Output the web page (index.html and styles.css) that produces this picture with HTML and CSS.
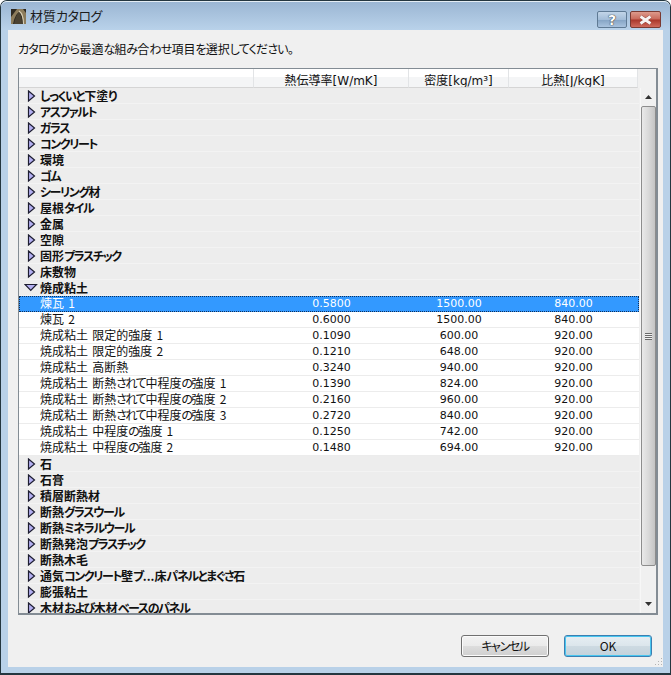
FILE: index.html
```html
<!DOCTYPE html>
<html lang="ja">
<head>
<meta charset="utf-8">
<title>材質カタログ</title>
<link rel="stylesheet" href="styles.css">
</head>
<body>
<svg class="defs" width="0" height="0" aria-hidden="true">
  <symbol id="closed" viewBox="0 0 9 12"><path d="M1.500 1 L7.500 6 L1.500 11 Z" fill="#b4b0f2" stroke="#1c1c30" stroke-width="1.200"/></symbol>
  <symbol id="open" viewBox="0 0 14 9"><path d="M1 1.500 H12.500 L6.750 7.500 Z" fill="#b4b0f2" stroke="#1c1c30" stroke-width="1.200"/></symbol>
</svg>
<div class="window">
  <header class="titlebar">
    <svg class="app-icon" viewBox="0 0 15 15" aria-hidden="true">
      <rect width="15" height="15" fill="#2e2a22"/>
      <path d="M0 15 V8 L6 0 H12 L15 4 V15 H12 C12 8 10 4 8 3 C5 5 3 10 2 15 Z" fill="#8c7c5c"/>
      <path d="M3 15 C4 9 6 5 8 3 C10 5 11 9 11 15 Z" fill="#4a4232"/>
      <path d="M8 2 C11 4 12.500 9 12.500 15" fill="none" stroke="#d6cdb4" stroke-width="1.200"/>
    </svg>
    <span class="title">材質<span class="k">カタログ</span></span>
    <div class="caption-btns">
      <button class="cap cap-help">?</button>
      <button class="cap cap-close">
        <svg viewBox="0 0 15 10" width="15" height="10" aria-hidden="true"><path d="M2.500 1.500 L12.500 8.500 M12.500 1.500 L2.500 8.500" stroke="#8a3a30" stroke-width="3.600"/><path d="M2.500 1.500 L12.500 8.500 M12.500 1.500 L2.500 8.500" stroke="#f7f4f3" stroke-width="2.800"/></svg>
      </button>
    </div>
  </header>
  <main class="client">
    <p class="prompt"><span class="k">カタログから</span>最適<span class="k">な</span>組<span class="k">み</span>合<span class="k">わせ</span>項目<span class="k">を</span>選択<span class="k">してください。</span></p>
    <section class="table">
      <div class="head">
        <div class="hcell hname"></div>
        <div class="hcell">熱伝導率<span class="lat">[W/mK]</span></div>
        <div class="hcell">密度<span class="lat">[kg/m³]</span></div>
        <div class="hcell hlast">比熱<span class="lat">[J/kgK]</span></div>
      </div>
      <div class="body">
        <div class="rows">
          <div class="row group"><svg class="arrow"><use href="#closed"/></svg><span><span class="k">しっくいと</span>下塗<span class="k">り</span></span></div>
          <div class="row group"><svg class="arrow"><use href="#closed"/></svg><span><span class="k">アスファルト</span></span></div>
          <div class="row group"><svg class="arrow"><use href="#closed"/></svg><span><span class="k">ガラス</span></span></div>
          <div class="row group"><svg class="arrow"><use href="#closed"/></svg><span><span class="k">コンクリート</span></span></div>
          <div class="row group"><svg class="arrow"><use href="#closed"/></svg><span>環境</span></div>
          <div class="row group"><svg class="arrow"><use href="#closed"/></svg><span><span class="k">ゴム</span></span></div>
          <div class="row group"><svg class="arrow"><use href="#closed"/></svg><span><span class="k">シーリング</span>材</span></div>
          <div class="row group"><svg class="arrow"><use href="#closed"/></svg><span>屋根<span class="k">タイル</span></span></div>
          <div class="row group"><svg class="arrow"><use href="#closed"/></svg><span>金属</span></div>
          <div class="row group"><svg class="arrow"><use href="#closed"/></svg><span>空隙</span></div>
          <div class="row group"><svg class="arrow"><use href="#closed"/></svg><span>固形<span class="k">プラスチック</span></span></div>
          <div class="row group"><svg class="arrow"><use href="#closed"/></svg><span>床敷物</span></div>
          <div class="row group"><svg class="arrow-open"><use href="#open"/></svg><span>焼成粘土</span></div>
          <div class="row item selected"><span class="name">煉瓦 1</span><span class="val">0.5800</span><span class="val">1500.00</span><span class="val">840.00</span></div>
          <div class="row item"><span class="name">煉瓦 2</span><span class="val">0.6000</span><span class="val">1500.00</span><span class="val">840.00</span></div>
          <div class="row item"><span class="name">焼成粘土 限定的強度 1</span><span class="val">0.1090</span><span class="val">600.00</span><span class="val">920.00</span></div>
          <div class="row item"><span class="name">焼成粘土 限定的強度 2</span><span class="val">0.1210</span><span class="val">648.00</span><span class="val">920.00</span></div>
          <div class="row item"><span class="name">焼成粘土 高断熱</span><span class="val">0.3240</span><span class="val">940.00</span><span class="val">920.00</span></div>
          <div class="row item"><span class="name">焼成粘土 断熱<span class="k">されて</span>中程度<span class="k">の</span>強度 1</span><span class="val">0.1390</span><span class="val">824.00</span><span class="val">920.00</span></div>
          <div class="row item"><span class="name">焼成粘土 断熱<span class="k">されて</span>中程度<span class="k">の</span>強度 2</span><span class="val">0.2160</span><span class="val">960.00</span><span class="val">920.00</span></div>
          <div class="row item"><span class="name">焼成粘土 断熱<span class="k">されて</span>中程度<span class="k">の</span>強度 3</span><span class="val">0.2720</span><span class="val">840.00</span><span class="val">920.00</span></div>
          <div class="row item"><span class="name">焼成粘土 中程度<span class="k">の</span>強度 1</span><span class="val">0.1250</span><span class="val">742.00</span><span class="val">920.00</span></div>
          <div class="row item"><span class="name">焼成粘土 中程度<span class="k">の</span>強度 2</span><span class="val">0.1480</span><span class="val">694.00</span><span class="val">920.00</span></div>
          <div class="row group"><svg class="arrow"><use href="#closed"/></svg><span>石</span></div>
          <div class="row group"><svg class="arrow"><use href="#closed"/></svg><span>石膏</span></div>
          <div class="row group"><svg class="arrow"><use href="#closed"/></svg><span>積層断熱材</span></div>
          <div class="row group"><svg class="arrow"><use href="#closed"/></svg><span>断熱<span class="k">グラスウール</span></span></div>
          <div class="row group"><svg class="arrow"><use href="#closed"/></svg><span>断熱<span class="k">ミネラルウール</span></span></div>
          <div class="row group"><svg class="arrow"><use href="#closed"/></svg><span>断熱発泡<span class="k">プラスチック</span></span></div>
          <div class="row group"><svg class="arrow"><use href="#closed"/></svg><span>断熱木毛</span></div>
          <div class="row group"><svg class="arrow"><use href="#closed"/></svg><span>通気<span class="k">コンクリート</span>壁<span class="k">ブ</span>...床<span class="k">パネルとまぐさ</span>石</span></div>
          <div class="row group"><svg class="arrow"><use href="#closed"/></svg><span>膨張粘土</span></div>
          <div class="row group"><svg class="arrow"><use href="#closed"/></svg><span>木材<span class="k">および</span>木材<span class="k">ベースのパネル</span></span></div>
        </div>
        <div class="scrollbar">
          <div class="sb-btn"><svg viewBox="0 0 7 4" width="7" height="4" aria-hidden="true"><path d="M3.500 0 L7 4 H0 Z" fill="#333"/></svg></div>
          <div class="thumb"><div class="grip"></div></div>
          <div class="sb-btn"><svg viewBox="0 0 7 4" width="7" height="4" aria-hidden="true"><path d="M0 0 H7 L3.500 4 Z" fill="#333"/></svg></div>
        </div>
      </div>
    </section>
    <footer class="actions">
      <button class="btn"><span class="k">キャンセル</span></button>
      <button class="btn btn-default">OK</button>
    </footer>
    <svg class="size-grip" viewBox="0 0 8 8" aria-hidden="true"><path d="M6 0h1v1H6zM3 3h1v1H3zM6 3h1v1H6zM0 6h1v1H0zM3 6h1v1H3zM6 6h1v1H6z" fill="#b4b4b4"/></svg>
  </main>
</div>
</body>
</html>
```
FILE: styles.css
```css
* { box-sizing: border-box; }
html, body { margin: 0; padding: 0; }
body {
  width: 671px;
  height: 675px;
  overflow: hidden;
  background: #fff;
  font-family: "Noto Sans CJK JP", sans-serif;
  font-size: 12px;
  font-feature-settings: "palt";
  color: #111;
}
.defs { position: absolute; }
.k { letter-spacing: -1.4px; }
.window {
  width: 671px;
  height: 675px;
  display: flex;
  flex-direction: column;
  border: 1px solid #24363f;
  border-bottom-width: 2px;
  border-radius: 7px 7px 0 0;
  background: #b9d1e8;
  padding: 0 7px 6px;
}
.titlebar {
  height: 29px;
  flex: none;
  display: flex;
  align-items: center;
  margin: 0 -7px;
  padding: 0 9px 0 10px;
  background: linear-gradient(#9bb6d3, #b9d2ea);
  border-top: 1px solid #e4edf4;
  border-radius: 6px 6px 0 0;
}
.app-icon { width: 15px; height: 15px; flex: none; }
.title { margin-left: 4px; font-size: 13px; color: #1c1c1c; line-height: 16px; }
.title .k { letter-spacing: -.5px; }
.caption-btns { margin-left: auto; display: flex; gap: 3px; align-self: flex-start; margin-top: 9px; }
.cap {
  height: 17px;
  padding: 0;
  display: flex;
  align-items: center;
  justify-content: center;
  border-radius: 2px;
  font-family: "DejaVu Sans", sans-serif;
}
.cap-help {
  width: 30px;
  border: 1px solid #5f7a94;
  background: linear-gradient(#c2d5e8 0, #a3bdd8 50%, #84a3c4 52%, #a9c3de 100%);
  color: #fff;
  font-weight: bold;
  font-size: 14px;
  text-shadow: 0 0 1px #222, 0 0 1px #222;
}
.cap-close {
  width: 31px;
  border: 1px solid #7a3a32;
  background: linear-gradient(#dd9a8c 0, #c9695a 48%, #a9362a 52%, #cf6a5c 100%);
}
.client {
  flex: 1;
  min-height: 0;
  position: relative;
  display: flex;
  flex-direction: column;
  background: #f0f0f0;
  padding: 0 6px 0 10px;
}
.prompt { margin: 10px 0 11px; height: 17px; line-height: 17px; }
.prompt .k { letter-spacing: -.8px; }
.table {
  width: 640px;
  height: 547px;
  flex: none;
  display: flex;
  flex-direction: column;
  border: 1px solid #838c94;
  border-right-width: 2px;
  border-bottom-width: 2px;
  background: #f0f0f0;
  overflow: hidden;
}
.head {
  height: 19px;
  flex: none;
  display: grid;
  grid-template-columns: 235px 155px 100px 129px;
}
.hcell {
  height: 19px;
  background: linear-gradient(#fff 0, #fff 42%, #f4f5f6 46%, #f4f5f6 100%);
  border-right: 1px solid #e2e4e6;
  border-bottom: 1px solid #d5d5d5;
  text-align: center;
  line-height: 21px;
  overflow: hidden;
  white-space: nowrap;
}
.lat { font-family: "DejaVu Sans", sans-serif; font-size: 12px; }
.body { flex: 1; min-height: 0; display: flex; }
.rows { width: 620px; flex: none; overflow: hidden; }
.row {
  height: 16px;
  display: grid;
  line-height: 15px;
  white-space: nowrap;
}
.group {
  display: flex;
  align-items: center;
  background: #ededed;
  border-bottom: 1px solid #f3f3f3;
  font-weight: 700;
  padding-left: 8px;
}
.group > span { margin-left: 4px; margin-top: -1px; }
.arrow { width: 9px; height: 12px; flex: none; }
.arrow-open { width: 14px; height: 9px; margin-left: -3px; margin-right: -2px; flex: none; }
.item {
  grid-template-columns: 235px 155px 100px 129px;
  background: #fff;
  border-bottom: 1px solid #ececec;
}
.name { padding-left: 21px; line-height: 13px; word-spacing: 1.500px; }
.val { text-align: center; font-family: "DejaVu Sans", sans-serif; font-size: 11px; }
.selected {
  background: #3399ff;
  color: #fff;
  outline: 1px dotted #10305a;
  outline-offset: -1px;
  border-bottom-color: transparent;
}
.scrollbar {
  width: 16px;
  margin-left: 1px;
  flex: none;
  display: flex;
  flex-direction: column;
  background: #f0f0f0;
  border-left: 1px solid #f7f7f7;
}
.sb-btn { height: 18px; flex: none; display: flex; align-items: center; justify-content: center; }
.thumb {
  height: 460px;
  flex: none;
  margin-bottom: auto;
  display: flex;
  align-items: center;
  justify-content: center;
  border: 1px solid #8d8d8d;
  border-radius: 2px;
  background: linear-gradient(90deg, #e9e9e9, #d9d9d9 50%, #c4c4c4);
}
.grip {
  width: 7px;
  height: 7px;
  background: repeating-linear-gradient(#6a6a6a 0 1px, #f2f2f2 1px 2px);
}
.actions {
  display: flex;
  justify-content: flex-end;
  gap: 15px;
  margin-top: 20px;
  padding-right: 5px;
}
.btn {
  width: 88px;
  height: 22px;
  padding: 0;
  border: 1px solid #707070;
  border-radius: 3px;
  background: linear-gradient(#f2f2f2 0, #ebebeb 48%, #dddddd 52%, #cfcfcf 100%);
  box-shadow: inset 0 0 0 1px #fbfbfb;
  font-family: "Noto Sans CJK JP", sans-serif;
  font-feature-settings: "palt";
  font-size: 12px;
  line-height: 18px;
  color: #111;
}
.btn-default {
  border-color: #3c7fb1;
  background: linear-gradient(#e6eef3 0, #dce6ec 48%, #cddae2 52%, #c3d2db 100%);
  box-shadow: inset 0 0 0 1px #48c6f0;
}
.size-grip { position: absolute; right: 0; bottom: 1px; width: 8px; height: 8px; }
```
